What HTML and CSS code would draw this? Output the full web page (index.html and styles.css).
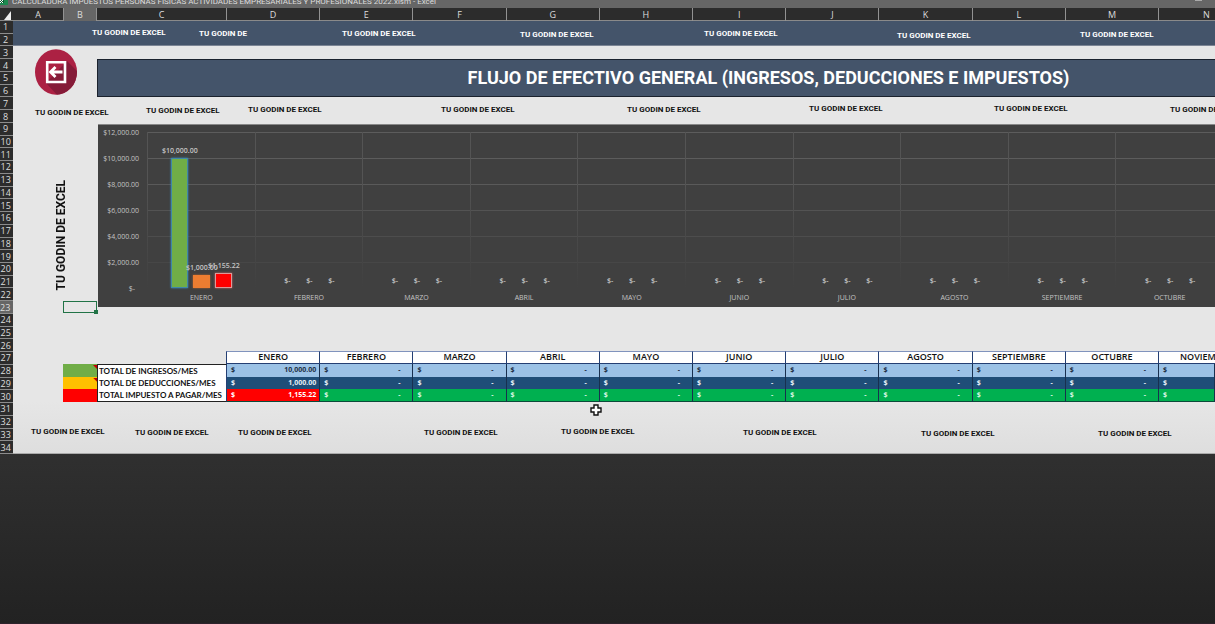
FILE: index.html
```html
<!DOCTYPE html>
<html lang="es">
<head>
<meta charset="utf-8">
<title>Flujo de efectivo general</title>
<link rel="stylesheet" href="styles.css">
</head>
<body>
<header class="titlebar">
  <svg class="app-icon" viewBox="0 0 9 8" aria-hidden="true"><rect width="8" height="5" fill="#1d8a50"/><path d="M0 0h4v3H0z" fill="#0c5a32"/><path d="M0 0l3 3M3 0L0 3" stroke="#fff" stroke-width="1"/></svg>
  <span class="file-name">CALCULADORA IMPUESTOS PERSONAS FISICAS ACTIVIDADES EMPRESARIALES Y PROFESIONALES 2022.xlsm - Excel</span>
  <span class="minimize"></span>
</header>
<main class="workbook">
  <div class="columns">
    <span class="corner"></span><span>A</span><span class="current">B</span><span>C</span><span>D</span><span>E</span><span>F</span><span>G</span><span>H</span><span>I</span><span>J</span><span>K</span><span>L</span><span>M</span><span class="cut-letter">N</span>
  </div>
  <div class="body">
    <div class="rows">
      <span>1</span><span>2</span><span>3</span><span>4</span><span>5</span><span>6</span><span>7</span><span>8</span><span>9</span><span>10</span><span>11</span><span>12</span><span>13</span><span>14</span><span>15</span><span>16</span><span>17</span><span>18</span><span>19</span><span>20</span><span>21</span><span>22</span><span class="current">23</span><span>24</span><span>25</span><span>26</span><span>27</span><span>28</span><span>29</span><span>30</span><span>31</span><span>32</span><span>33</span><span>34</span>
    </div>
    <div class="sheet">
      <div class="top-band"></div>
      <button class="back" aria-label="Regresar">
        <svg viewBox="0 0 42 46" aria-hidden="true">
          <defs><clipPath id="disc"><ellipse cx="21" cy="23" rx="21" ry="22.8"/></clipPath></defs>
          <g clip-path="url(#disc)"><path d="M0 0h42v46H0z" fill="#ac2143"/><path d="M32 12L44 24v24H24L11 34z" fill="#851b38"/></g>
          <path d="M12.200 13.200h17.800v19.800H12.200z" fill="none" stroke="#fff" stroke-width="2.600"/>
          <path d="M27.500 23H16M20.500 18L15.500 23l5 5" fill="none" stroke="#fff" stroke-width="2.800"/>
        </svg>
      </button>
      <h1 class="heading">FLUJO DE EFECTIVO GENERAL (INGRESOS, DEDUCCIONES E IMPUESTOS)</h1>

      <section class="chart" aria-label="Flujo por mes">
        <div class="axis"><span>$12,000.00</span><span>$10,000.00</span><span>$8,000.00</span><span>$6,000.00</span><span>$4,000.00</span><span>$2,000.00</span><span class="zero">$-</span></div>
        <div class="plot">
          <div class="month"><div class="bars"><div class="bar"><b>$10,000.00</b><i class="income"></i></div><div class="bar"><b>$1,000.00</b><i class="deduction"></i></div><div class="bar"><b>$1,155.22</b><i class="tax"></i></div></div><span>ENERO</span></div>
          <div class="month"><div class="bars"><div class="bar"><b>$-</b></div><div class="bar"><b>$-</b></div><div class="bar"><b>$-</b></div></div><span>FEBRERO</span></div>
          <div class="month"><div class="bars"><div class="bar"><b>$-</b></div><div class="bar"><b>$-</b></div><div class="bar"><b>$-</b></div></div><span>MARZO</span></div>
          <div class="month"><div class="bars"><div class="bar"><b>$-</b></div><div class="bar"><b>$-</b></div><div class="bar"><b>$-</b></div></div><span>ABRIL</span></div>
          <div class="month"><div class="bars"><div class="bar"><b>$-</b></div><div class="bar"><b>$-</b></div><div class="bar"><b>$-</b></div></div><span>MAYO</span></div>
          <div class="month"><div class="bars"><div class="bar"><b>$-</b></div><div class="bar"><b>$-</b></div><div class="bar"><b>$-</b></div></div><span>JUNIO</span></div>
          <div class="month"><div class="bars"><div class="bar"><b>$-</b></div><div class="bar"><b>$-</b></div><div class="bar"><b>$-</b></div></div><span>JULIO</span></div>
          <div class="month"><div class="bars"><div class="bar"><b>$-</b></div><div class="bar"><b>$-</b></div><div class="bar"><b>$-</b></div></div><span>AGOSTO</span></div>
          <div class="month"><div class="bars"><div class="bar"><b>$-</b></div><div class="bar"><b>$-</b></div><div class="bar"><b>$-</b></div></div><span>SEPTIEMBRE</span></div>
          <div class="month"><div class="bars"><div class="bar"><b>$-</b></div><div class="bar"><b>$-</b></div><div class="bar"><b>$-</b></div></div><span>OCTUBRE</span></div>
        </div>
      </section>

      <div class="side-mark">TU GODIN DE EXCEL</div>
      <div class="selection"></div>

      <table class="totals">
        <thead><tr><td></td><td></td><th>ENERO</th><th>FEBRERO</th><th>MARZO</th><th>ABRIL</th><th>MAYO</th><th>JUNIO</th><th>JULIO</th><th>AGOSTO</th><th>SEPTIEMBRE</th><th>OCTUBRE</th><th class="cut-month">NOVIEMBRE</th></tr></thead>
        <tbody>
          <tr class="row-income"><td class="key noted"></td><th scope="row">TOTAL DE INGRESOS/MES</th><td><span>$</span><span>10,000.00</span></td><td><span>$</span><span>-</span></td><td><span>$</span><span>-</span></td><td><span>$</span><span>-</span></td><td><span>$</span><span>-</span></td><td><span>$</span><span>-</span></td><td><span>$</span><span>-</span></td><td><span>$</span><span>-</span></td><td><span>$</span><span>-</span></td><td><span>$</span><span>-</span></td><td><span>$</span></td></tr>
          <tr class="row-deduction"><td class="key noted"></td><th scope="row">TOTAL DE DEDUCCIONES/MES</th><td><span>$</span><span>1,000.00</span></td><td><span>$</span><span>-</span></td><td><span>$</span><span>-</span></td><td><span>$</span><span>-</span></td><td><span>$</span><span>-</span></td><td><span>$</span><span>-</span></td><td><span>$</span><span>-</span></td><td><span>$</span><span>-</span></td><td><span>$</span><span>-</span></td><td><span>$</span><span>-</span></td><td><span>$</span></td></tr>
          <tr class="row-tax"><td class="key"></td><th scope="row">TOTAL IMPUESTO A PAGAR/MES</th><td class="due"><span>$</span><span>1,155.22</span></td><td><span>$</span><span>-</span></td><td><span>$</span><span>-</span></td><td><span>$</span><span>-</span></td><td><span>$</span><span>-</span></td><td><span>$</span><span>-</span></td><td><span>$</span><span>-</span></td><td><span>$</span><span>-</span></td><td><span>$</span><span>-</span></td><td><span>$</span><span>-</span></td><td><span>$</span></td></tr>
        </tbody>
      </table>

      <div class="marks marks-top"><span>TU GODIN DE EXCEL</span><span>TU GODIN DE</span><span>TU GODIN DE EXCEL</span><span>TU GODIN DE EXCEL</span><span>TU GODIN DE EXCEL</span><span>TU GODIN DE EXCEL</span><span>TU GODIN DE EXCEL</span></div>
      <div class="marks marks-middle"><span>TU GODIN DE EXCEL</span><span>TU GODIN DE EXCEL</span><span>TU GODIN DE EXCEL</span><span>TU GODIN DE EXCEL</span><span>TU GODIN DE EXCEL</span><span>TU GODIN DE EXCEL</span><span>TU GODIN DE EXCEL</span><span>TU GODIN DE EXCEL</span></div>
      <div class="marks marks-bottom"><span>TU GODIN DE EXCEL</span><span>TU GODIN DE EXCEL</span><span>TU GODIN DE EXCEL</span><span>TU GODIN DE EXCEL</span><span>TU GODIN DE EXCEL</span><span>TU GODIN DE EXCEL</span><span>TU GODIN DE EXCEL</span><span>TU GODIN DE EXCEL</span></div>

      <svg class="pointer" viewBox="0 0 12 12" aria-hidden="true"><path d="M4 1h4v3h3v4H8v3H4V8H1V4h3z" fill="#fff" stroke="#111" stroke-width="1.400"/></svg>
    </div>
  </div>
</main>
</body>
</html>
```

FILE: styles.css
```css
* { box-sizing: border-box; }

body {
  margin: 0;
  min-height: 100vh;
  overflow: hidden;
  background: linear-gradient(#303030 72%, #222 100%);
  border-bottom: 1px solid #2d222b;
  font-family: "Open Sans", Lato, sans-serif;
  color: #111;
}

.titlebar {
  display: flex;
  height: 8px;
  overflow: hidden;
  background: #666;
}
.app-icon { width: 9px; height: 8px; margin-right: 3px; }
.file-name {
  flex: 1;
  color: #ddd;
  font-family: Roboto, sans-serif;
  font-size: 8px;
  line-height: 3px;
  white-space: nowrap;
}
.minimize { width: 7px; height: 1px; margin-right: 13px; background: #aaa; }

/* Column letters and sheet share the same tracks */
.columns {
  display: grid;
  grid-template-columns: 13px 51px 33px 130px repeat(10, 5fr) 3fr;
  height: 13px;
  background: #2c2c2c;
  border-bottom: 1px solid #8a8a8a;
}
.columns span {
  border-right: 1px solid #929292;
  color: #ddd;
  font-size: 9px;
  line-height: 13px;
  text-align: center;
}
.columns .current { background: #666; border-bottom: 1px solid #1f8a50; }
.columns .cut-letter { border: 0; padding-left: 44px; text-align: left; }
.columns .corner {
  border: 0;
  margin: 3px 2px 2px 4px;
  background: #eee;
  clip-path: polygon(100% 0, 100% 100%, 0 100%);
}

.body { display: grid; grid-template-columns: 13px 1fr; min-height: 433px; }

.rows {
  display: grid;
  grid-template-rows: repeat(34, 1fr);
  background: #2c2c2c;
}
.rows span {
  padding-right: 4px;
  border-bottom: 1px solid #8c8c8c;
  color: #ddd;
  font-size: 9px;
  line-height: 11px;
  display: flex;
  align-items: center;
  justify-content: center;
}
.rows .current { background: #666; border-right: 1px solid #1f8a50; }

.sheet {
  position: relative;
  display: grid;
  grid-template-columns: 51px 33px 130px repeat(10, 5fr) 3fr;
  grid-template-rows: repeat(34, minmax(0, 1fr));
  overflow: hidden;
  background: linear-gradient(#e6e6e6 88%, #dedede);
  border-bottom: 1px solid #aaa;
}

.top-band {
  grid-area: 1 / 1 / 3 / -1;
  background: #44546a;
  border-bottom: 1px solid #7c8594;
}

.back {
  grid-area: 3 / 1 / 7 / 3;
  align-self: center;
  width: 42px;
  margin-left: 22px;
  padding: 0;
  border: 0;
  background: none;
}
.back svg { display: block; width: 42px; height: 46px; }

.heading {
  grid-area: 4 / 3 / 7 / -1;
  display: flex;
  align-items: center;
  justify-content: center;
  margin: 0;
  padding-left: 224px;
  border: 1px solid #1b222d;
  border-right: 0;
  background: #44546a;
  color: #fff;
  font-family: Roboto, sans-serif;
  font-size: 18px;
  font-weight: 700;
  line-height: 24px;
  white-space: nowrap;
}

.chart {
  grid-area: 9 / 3 / 24 / -1;
  display: grid;
  grid-template-columns: 49px 1fr;
  margin: 1px -8px 6px 1px;
  padding-top: 7px;
  background: #404040;
  border-top: 1px solid #888;
  color: #c4c4c4;
  font-size: 7px;
}
.axis {
  display: grid;
  grid-template-rows: repeat(6, 26px) 10px;
  margin-top: -4px;
  padding-right: 8px;
  line-height: 10px;
  text-align: right;
}
.axis .zero { padding-right: 4px; }
.plot {
  position: relative;
  display: grid;
  grid-template-columns: repeat(10, 1fr);
  align-items: start;
}
.plot::before {
  content: "";
  position: absolute;
  inset: 0 0 auto;
  height: 156px;
  background: repeating-linear-gradient(#5c5c5c 0 1px, transparent 1px 26px);
  mask-image: linear-gradient(#000 30%, transparent);
}
.month { position: relative; text-align: center; }
.month::before {
  content: "";
  position: absolute;
  inset: 0 auto auto 0;
  width: 1px;
  height: 156px;
  background: linear-gradient(#545454 30%, #404040);
}
.month > span { display: block; margin-top: 5px; padding-left: 1px; line-height: 10px; }
.bars {
  position: relative;
  display: flex;
  justify-content: center;
  gap: 5px;
  height: 156px;
  padding-left: 2px;
}
.bar {
  display: flex;
  flex-direction: column;
  align-items: center;
  justify-content: flex-end;
  width: 17px;
}
.bar b { padding-bottom: 2px; font-weight: 600; line-height: 10px; white-space: nowrap; }
.income { width: 17px; height: 130px; background: #70ad47; border: 1px solid #3f87a8; box-shadow: 0 0 2px #3c8ec0; }
.deduction { width: 17px; height: 13px; background: #ed7d31; box-shadow: 0 0 2px #b5652f; }
.tax { width: 17px; height: 15px; background: #f00; border: 1px solid #d99; box-shadow: 0 0 2px #c66; }

.side-mark {
  grid-area: 12 / 1 / 23 / 3;
  align-self: end;
  margin: 0 0 10px 40px;
  writing-mode: vertical-rl;
  rotate: 180deg;
  justify-self: start;
  font-family: Roboto, sans-serif;
  font-size: 12px;
  font-weight: 700;
  line-height: 16px;
  white-space: nowrap;
}

.selection {
  grid-area: 23 / 2 / 24 / 3;
  position: relative;
  margin-left: -1px;
  border: 1px solid #217346;
}
.selection::after {
  content: "";
  position: absolute;
  right: -2px;
  bottom: -2px;
  width: 4px;
  height: 4px;
  background: #217346;
}

.totals {
  grid-area: 27 / 2 / 31 / -1;
  display: grid;
  grid-template-columns: subgrid;
  grid-template-rows: subgrid;
}
.totals thead, .totals tbody, .totals tr { display: contents; }
.totals th {
  overflow: hidden;
  padding: 0;
  border-right: 1px solid #243f73;
  background: #fff;
  font-size: 9px;
  font-weight: 600;
  line-height: 11px;
  white-space: nowrap;
}
.totals thead th { border-top: 1px solid #8093bd; border-bottom: 1px solid #243f73; line-height: 10px; }
.totals thead th:nth-child(3) { margin-left: -1px; border-left: 1px solid #243f73; }
.totals thead .cut-month { padding-left: 21px; text-align: left; border-right: 0; }
.totals tbody th {
  padding: 1px 0 0 1px;
  border-left: 1px solid #222;
  font-family: Lato, sans-serif;
  font-size: 8px;
  font-weight: 700;
  line-height: 10px;
  text-align: left;
}
.totals .row-income th { border-top: 1px solid #222; }
.totals .row-tax th { border-bottom: 1px solid #222; }
.totals td { padding: 0; }
.totals tbody td:not(.key) {
  display: flex;
  justify-content: space-between;
  padding: 0 3px 0 4px;
  border-right: 1px solid #18304f;
  font-size: 7px;
  font-weight: 700;
  line-height: 11px;
}
.totals tbody td:nth-child(n+4):not(.key) { padding-right: 12px; }
.row-income td { background: #9bc2e6; color: #1d2f45; }
.row-deduction td { background: #1f4e78; color: #e6eef6; }
.row-tax td { background: #00b050; color: #d5f5e0; border-bottom: 1px solid #0b4a3a; }
.row-tax .due { background: #f00; color: #fff; }
.row-income .key { background: #70ad47; }
.row-deduction .key { background: #ffc000; }
.row-tax .key { background: #f00; border: 0; }
.key { margin-left: -1px; }
.noted { position: relative; }
.noted::after {
  content: "";
  position: absolute;
  top: 1px;
  right: 0;
  width: 4px;
  height: 4px;
  background: #c00000;
  clip-path: polygon(0 0, 100% 0, 100% 100%);
}

/* Floating text boxes laid freely over the sheet */
.marks {
  position: absolute;
  inset: 0 0 auto;
  font-family: Roboto, sans-serif;
  font-size: 8px;
  font-weight: 700;
  line-height: 10px;
  white-space: nowrap;
}
.marks span { position: absolute; top: 0; }
.marks-top { top: 8px; color: #fff; }
.marks-top span:nth-child(1) { left: 79px; top: -1px; }
.marks-top span:nth-child(2) { left: 186px; }
.marks-top span:nth-child(3) { left: 329px; }
.marks-top span:nth-child(4) { left: 507px; top: 1px; }
.marks-top span:nth-child(5) { left: 691px; }
.marks-top span:nth-child(6) { left: 884px; top: 2px; }
.marks-top span:nth-child(7) { left: 1067px; top: 1px; }
.marks-middle { top: 84px; }
.marks-middle span:nth-child(1) { left: 22px; top: 3px; }
.marks-middle span:nth-child(2) { left: 133px; top: 1px; }
.marks-middle span:nth-child(3) { left: 235px; }
.marks-middle span:nth-child(4) { left: 428px; }
.marks-middle span:nth-child(5) { left: 614px; }
.marks-middle span:nth-child(6) { left: 796px; top: -1px; }
.marks-middle span:nth-child(7) { left: 981px; top: -1px; }
.marks-middle span:nth-child(8) { left: 1157px; }
.marks-bottom { top: 407px; }
.marks-bottom span:nth-child(1) { left: 18px; top: -1px; }
.marks-bottom span:nth-child(2) { left: 122px; }
.marks-bottom span:nth-child(3) { left: 225px; }
.marks-bottom span:nth-child(4) { left: 411px; }
.marks-bottom span:nth-child(5) { left: 548px; top: -1px; }
.marks-bottom span:nth-child(6) { left: 730px; }
.marks-bottom span:nth-child(7) { left: 908px; top: 1px; }
.marks-bottom span:nth-child(8) { left: 1085px; top: 1px; }

.pointer { position: absolute; left: 577px; top: 383px; width: 12px; height: 12px; }
```
